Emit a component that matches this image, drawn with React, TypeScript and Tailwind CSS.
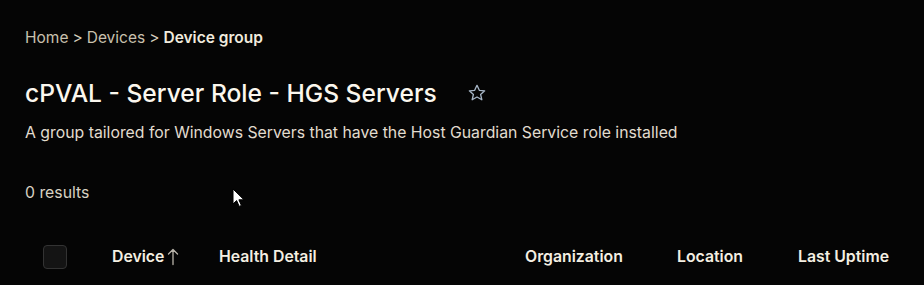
import React from "react";

const columns = [
  { label: "Organization", className: "w-[152px]" },
  { label: "Location", className: "w-[121px]" },
  { label: "Last Uptime", className: "" },
];

export default function App() {
  return (
    <main
      className="relative w-[924px] h-[285px] overflow-hidden bg-[#050505] text-[#f4efe4] px-[25px] pt-[28px]"
      style={{ fontFamily: "Inter, 'Noto Sans', sans-serif" }}
    >
      <nav className="flex items-center gap-[4px] text-[15.5px] leading-[20px] text-[#c9c1ae]">
        <span>Home</span>
        <span className="text-[#d6cfbf]">&gt;</span>
        <span>Devices</span>
        <span className="text-[#d6cfbf]">&gt;</span>
        <span className="font-semibold text-[#f1ebde]">Device group</span>
      </nav>

      <div className="flex items-center mt-[29px] h-[32px]">
        <h1 className="text-[24.6px] font-medium leading-[32px] text-[#fbf7ee]">
          cPVAL - Server Role - HGS Servers
        </h1>
        <button className="ml-[30px] text-[#a7b6c6]">
          <svg width="20" height="20" viewBox="0 0 24 24" fill="none" stroke="currentColor" strokeWidth="1.6" strokeLinejoin="round">
            <path d="M12 2.8l2.8 6 6.4.6-4.9 4.3 1.5 6.4L12 16.8l-5.8 3.3 1.5-6.4-4.9-4.3 6.4-.6z" />
          </svg>
        </button>
      </div>

      <p className="mt-[14px] text-[15.8px] leading-[20px] text-[#e2dccf]">
        A group tailored for Windows Servers that have the Host Guardian Service role installed
      </p>

      <p className="mt-[40px] text-[15.8px] leading-[20px] text-[#d8d1c2]">0 results</p>

      <div className="flex items-center mt-[39px] h-[30px] text-[15.8px] font-semibold text-[#f4efe2]">
        <div className="w-[87px] flex items-center pl-[18px]">
          <span className="block w-[24px] h-[24px] rounded-[4px] border border-[#333333] bg-[#141414]" />
        </div>
        <div className="w-[107px] flex items-center gap-[3px]">
          <span>Device</span>
          <svg width="12" height="18" viewBox="0 0 12 18" fill="none" stroke="#b9b4aa" strokeWidth="1.3" strokeLinecap="round" strokeLinejoin="round">
            <path d="M6 16.5V1.5M1.5 6L6 1.5 10.5 6" />
          </svg>
        </div>
        <div className="w-[306px]">Health Detail</div>
        {columns.map((c) => (
          <div key={c.label} className={c.className}>
            {c.label}
          </div>
        ))}
      </div>

      <svg
        className="absolute left-[232px] top-[188px]"
        width="13"
        height="20"
        viewBox="0 0 13 20"
      >
        <path d="M1 1v15l3.6-3.4 2.6 5.8 2.2-1-2.5-5.6H12z" fill="#ffffff" stroke="#000" strokeWidth="1" />
      </svg>
    </main>
  );
}
